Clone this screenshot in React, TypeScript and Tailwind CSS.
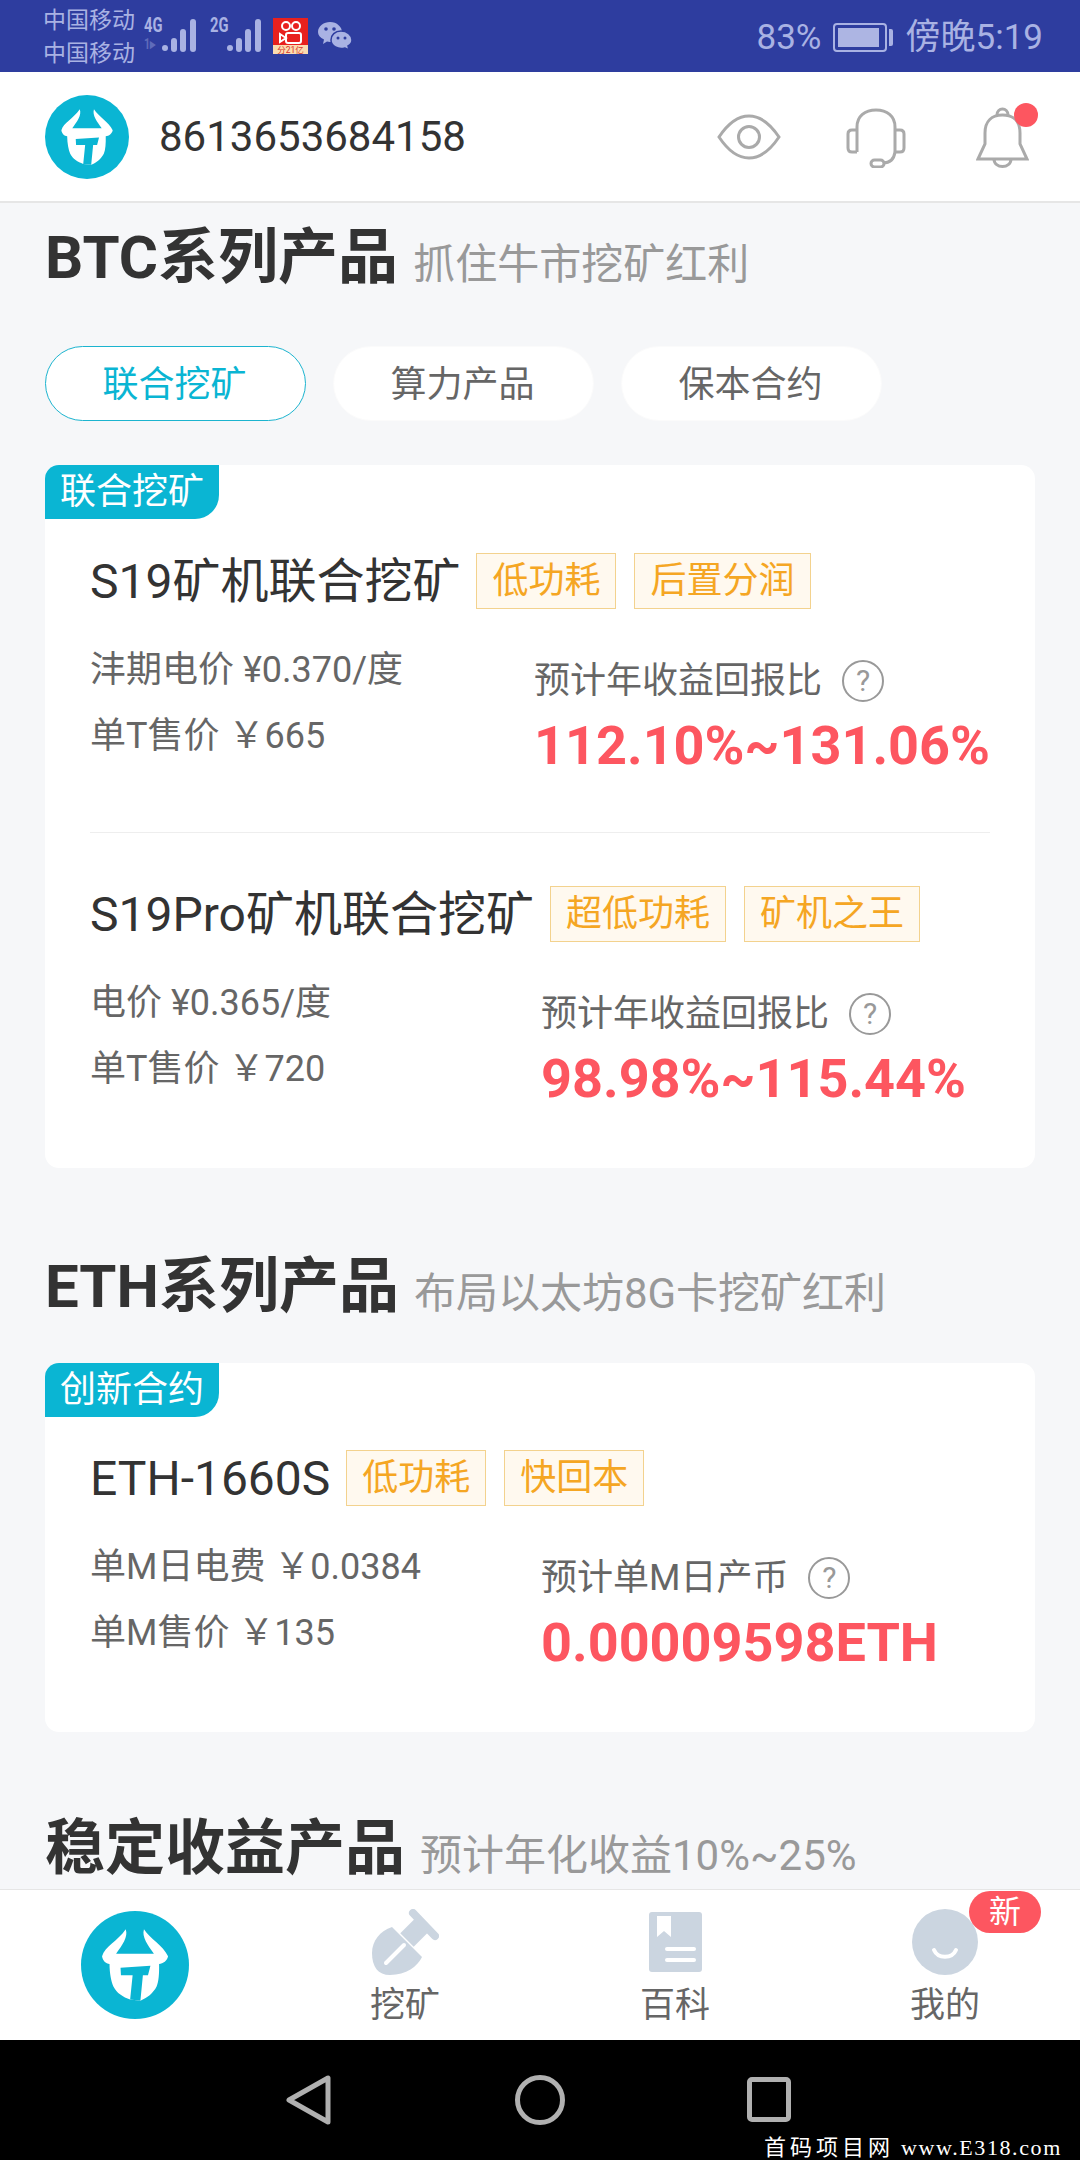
const RED = "#fd5660";

function BullLogo({ size }: { size: number }) {
  return (
    <svg width={size} height={size} viewBox="0 0 100 100" className="shrink-0">
      <circle cx="50" cy="50" r="50" fill="#0ab5d3" />
      <path
        d="M41.400 17 C44 24 38 32 32.500 39.500 L67.500 39.500 C62 32 56 24 58.300 17 C64 26 76 32 80.600 42 C80 46 76 49 72.300 49 C72.500 58 72 65 70 70 C67 76 61 81 55 83 L45.500 82 C39 80 33 76 30 70 C28 65 26.500 58 26.400 49 C23 49 20 46 19.500 42 C22 33 34 28 41.400 17 Z"
        fill="#fff"
      />
      <path
        d="M36.600 52.500 L64.300 50.600 L62 59.600 L57.300 59.600 L55 83 L45.500 82 L47.800 59.600 L37 59.600 Z"
        fill="#0ab5d3"
      />
    </svg>
  );
}

function Signal() {
  return (
    <svg width="35" height="33" viewBox="0 0 35 33" fill="#a9b2e3">
      <circle cx="3" cy="29" r="3" />
      <rect x="9" y="19" width="6" height="14" rx="3" />
      <rect x="18" y="10" width="6" height="23" rx="3" />
      <rect x="28" y="0" width="6" height="33" rx="3" />
    </svg>
  );
}

function Kuaishou() {
  return (
    <svg width="35" height="36" viewBox="0 0 35 36" className="shrink-0">
      <rect width="35" height="36" fill="#e8211e" />
      <rect y="27" width="35" height="9" fill="#fbdcb0" />
      <circle cx="13" cy="8" r="4" fill="none" stroke="#fff" strokeWidth="2" />
      <circle cx="23" cy="8" r="4" fill="none" stroke="#fff" strokeWidth="2" />
      <rect x="13" y="15" width="15" height="10" rx="2" fill="none" stroke="#fff" strokeWidth="2" />
      <path d="M13 20 L7 16 V24 Z" fill="none" stroke="#fff" strokeWidth="2" />
      <text x="17.5" y="35" textAnchor="middle" fontSize="8.5" fill="#d8332a">
        分21亿
      </text>
    </svg>
  );
}

function Wechat() {
  return (
    <svg width="34" height="28" viewBox="0 0 34 28" className="shrink-0">
      <path d="M12 0 C19 0 24 5 24 10 C24 15 19 20 12 20 L9 19.500 L5 22 L6 17.500 C2 15.500 0 13 0 10 C0 4 6 0 12 0 Z" fill="#a9b2e3" />
      <circle cx="8" cy="7" r="1.800" fill="#2e3d9f" />
      <circle cx="16" cy="7" r="1.800" fill="#2e3d9f" />
      <path d="M23 9 C29 9 34 13 34 18 C34 21 32 23 30 24 L31 28 L27 26 C20 28 13 24 13 18 C13 13 17 9 23 9 Z" fill="#a9b2e3" stroke="#2e3d9f" strokeWidth="1.500" />
      <circle cx="20" cy="16" r="1.500" fill="#2e3d9f" />
      <circle cx="27" cy="16" r="1.500" fill="#2e3d9f" />
    </svg>
  );
}

function StatusBar() {
  return (
    <div className="flex h-[72px] items-center bg-[#2e3d9f] pl-[43px] pr-[37px] text-[#a9b2e3]">
      <div className="mt-[2px] flex w-[101px] flex-col text-[23px] leading-[33px]">
        <span>中国移动</span>
        <span>中国移动</span>
      </div>
      <div className="flex w-[18px] origin-left scale-x-[0.7] flex-col self-start whitespace-nowrap pt-[14px] text-[21px] font-bold leading-[22px]">
        <span>4G</span>
        <span className="text-[15px] leading-[16px] opacity-40">1▸</span>
      </div>
      <div className="self-start pt-[19px]">
        <Signal />
      </div>
      <div className="ml-[13px] w-[17px] origin-left scale-x-[0.7] self-start whitespace-nowrap pt-[14px] text-[21px] font-bold leading-[22px]">
        2G
      </div>
      <div className="self-start pt-[19px]">
        <Signal />
      </div>
      <div className="ml-[11px] self-start pt-[18px]">
        <Kuaishou />
      </div>
      <div className="ml-[10px] self-start pt-[22px]">
        <Wechat />
      </div>
      <div className="ml-auto mt-[3px] flex items-center text-[35px] leading-[72px]">
        <span>83%</span>
        <div className="ml-[11px] flex items-center">
          <div className="h-[29px] w-[54px] rounded-[4px] border-2 border-[#a9b2e3] p-[3px]">
            <div className="h-full w-[41px] bg-[#adb5e3]" />
          </div>
          <div className="ml-[2px] h-[17px] w-[4px] rounded-r-[2px] bg-[#a9b2e3]" />
        </div>
        <span className="ml-[13px]">傍晚5:19</span>
      </div>
    </div>
  );
}

function Header() {
  return (
    <div className="flex h-[131px] items-center border-b-2 border-[#e6e6e6] bg-white pl-[45px]">
      <BullLogo size={84} />
      <span className="ml-[30px] text-[42px] leading-none text-[#333]">8613653684158</span>
      <div className="ml-auto flex items-center pr-[51px]">
        <svg width="64" height="46" viewBox="0 0 64 46" fill="none" stroke="#aaa" strokeWidth="3">
          <path d="M2 23 C12 8 22 2 32 2 C42 2 52 8 62 23 C52 38 42 44 32 44 C22 44 12 38 2 23 Z" />
          <circle cx="32" cy="23" r="10.500" />
        </svg>
        <svg width="60" height="60" viewBox="0 0 60 60" fill="none" stroke="#aaa" strokeWidth="3" className="ml-[65px] mt-[2px]">
          <path d="M11 44 V19 C11 8 19 2 30 2 C41 2 49 8 49 19 V44" />
          <path d="M11 22 H6 C3 22 2 24 2 26 V40 C2 42 3 44 6 44 H11" />
          <path d="M49 22 H54 C57 22 58 24 58 26 V40 C58 42 57 44 54 44 H49" />
          <path d="M49 44 C48 51 44 55 37 55" />
          <rect x="25" y="52" width="13" height="7" rx="3.500" />
        </svg>
        <div className="relative ml-[70px] mt-[2px] h-[63px] w-[53px]">
          <svg width="53" height="63" viewBox="0 0 53 63" fill="none" stroke="#aaa" strokeWidth="3">
            <path d="M2 53 L9 38 V27 C9 15 16 9 26.500 9 C37 9 44 15 44 27 V38 L51 53 Z" />
            <path d="M21 9 C21 1 32 1 32 9" />
            <path d="M18 53 C18 63 35 63 35 53" />
          </svg>
          <span className="absolute right-[-9px] top-[-3px] h-[24px] w-[24px] rounded-full bg-[#fd5660]" />
        </div>
      </div>
    </div>
  );
}

function SectionHead({ title, sub, className }: { title: string; sub: string; className: string }) {
  return (
    <div className={`flex h-[70px] items-center gap-[15px] whitespace-nowrap ${className}`}>
      <span className="text-[60px] font-bold leading-[70px] text-[#333]">{title}</span>
      <span className="mt-[13px] text-[42px] leading-[70px] text-[#999]">{sub}</span>
    </div>
  );
}

function Tab({ label, active }: { label: string; active?: boolean }) {
  return (
    <div
      className={
        active
          ? "flex h-[75px] w-[261px] items-center justify-center rounded-full border-[1.5px] border-[#1cb4cf] bg-white pt-[2px] pr-[2px] text-[36px] text-[#0ab5d3]"
          : "flex h-[75px] w-[261px] items-center justify-center rounded-full border-[1.5px] border-[#fbfbfb] bg-white pt-[2px] pr-[2px] text-[36px] text-[#666]"
      }
    >
      {label}
    </div>
  );
}

function Badge({ label }: { label: string }) {
  return (
    <span className="flex h-[56px] items-center border border-[#f3d28e] bg-[#fff9ef] px-[15px] text-[36px] leading-none text-[#f5a623]">
      {label}
    </span>
  );
}

function CardTag({ label }: { label: string }) {
  return (
    <div className="flex h-[54px] w-[174px] items-center justify-center rounded-tl-[14px] rounded-br-[24px] bg-[#0ab5d3] text-[36px] leading-none text-white">
      {label}
    </div>
  );
}

type Product = {
  name: string;
  tags: string[];
  specs: string[];
  label: string;
  value: string;
  left: string;
};

function ProductRow({ p }: { p: Product }) {
  return (
    <div>
      <div className="flex h-[56px] items-center">
        <span className="pt-[2px] text-[48px] leading-[56px] text-[#333]">{p.name}</span>
        <div className="ml-[16px] flex gap-[18px]">
          {p.tags.map((t) => (
            <Badge key={t} label={t} />
          ))}
        </div>
      </div>
      <div className="mt-[28px] flex">
        <div className={`flex flex-col text-[36px] leading-[66px] text-[#666] ${p.left}`}>
          {p.specs.map((s) => (
            <span key={s}>{s}</span>
          ))}
        </div>
        <div className="mt-[12px] flex flex-col">
          <div className="flex h-[64px] items-center text-[36px] text-[#666]">
            <span>{p.label}</span>
            <span className="ml-[20px] flex h-[42px] w-[42px] items-center justify-center rounded-full border-2 border-[#999] text-[30px] leading-none text-[#999]">
              ?
            </span>
          </div>
          <span className="text-[54px] font-bold leading-[66px]" style={{ color: RED }}>
            {p.value}
          </span>
        </div>
      </div>
    </div>
  );
}

const btc: Product[] = [
  {
    name: "S19矿机联合挖矿",
    tags: ["低功耗", "后置分润"],
    specs: ["沣期电价 ¥0.370/度", "单T售价 ￥665"],
    label: "预计年收益回报比",
    value: "112.10%~131.06%",
    left: "w-[445px]",
  },
  {
    name: "S19Pro矿机联合挖矿",
    tags: ["超低功耗", "矿机之王"],
    specs: ["电价 ¥0.365/度", "单T售价 ￥720"],
    label: "预计年收益回报比",
    value: "98.98%~115.44%",
    left: "w-[451px]",
  },
];

const eth: Product = {
  name: "ETH-1660S",
  tags: ["低功耗", "快回本"],
  specs: ["单M日电费 ￥0.0384", "单M售价 ￥135"],
  label: "预计单M日产币",
  value: "0.00009598ETH",
  left: "w-[451px]",
};

function ShovelIcon() {
  return (
    <svg width="67" height="66" viewBox="0 0 67 66" fill="#cbd5e0">
      <path d="M41 4 L63 27" stroke="#cbd5e0" strokeWidth="8" strokeLinecap="round" />
      <path d="M51 15 L35 31" stroke="#cbd5e0" strokeWidth="19" />
      <path d="M20 18 L50 48 C46 57 34 66 18 66 C6 66 0 58 0 44 C0 32 8 22 20 18 Z" />
      <path d="M14 54 L32 36" stroke="#fff" strokeWidth="4" strokeLinecap="round" />
    </svg>
  );
}

function BookIcon() {
  return (
    <svg width="53" height="60" viewBox="0 0 53 60">
      <rect width="53" height="60" rx="3" fill="#cbd5e0" />
      <path d="M8 4 H22 V25 L15 19 L8 25 Z" fill="#fff" />
      <rect x="16" y="35" width="31" height="4" rx="2" fill="#fff" />
      <rect x="16" y="46" width="31" height="4" rx="2" fill="#fff" />
    </svg>
  );
}

function MeIcon() {
  return (
    <svg width="66" height="66" viewBox="0 0 66 66" fill="none">
      <circle cx="33" cy="33" r="33" fill="#cbd5e0" />
      <path d="M22 41 C26 50 40 50 44 41" stroke="#fff" strokeWidth="4" strokeLinecap="round" />
    </svg>
  );
}

function NavItem({ label, children }: { label: string; children: React.ReactNode }) {
  return (
    <div className="flex flex-col items-center pt-[19px]">
      <div className="flex h-[66px] items-center">{children}</div>
      <span className="mt-[8px] text-[35px] leading-[46px] text-[#666]">{label}</span>
    </div>
  );
}

function BottomNav() {
  return (
    <div className="grid h-[151px] grid-cols-4 border-t border-[#e6e6e6] bg-white">
      <div className="flex justify-center pt-[21px]">
        <BullLogo size={108} />
      </div>
      <NavItem label="挖矿">
        <ShovelIcon />
      </NavItem>
      <NavItem label="百科">
        <BookIcon />
      </NavItem>
      <div className="relative">
        <NavItem label="我的">
          <MeIcon />
        </NavItem>
        <span className="absolute left-[159px] top-[1px] flex h-[42px] w-[72px] items-center justify-center rounded-full bg-[#fd5660] text-[32px] leading-none text-white">
          新
        </span>
      </div>
    </div>
  );
}

function SystemBar() {
  return (
    <div className="relative flex h-[120px] items-start justify-center bg-black pt-[35px]">
      <svg width="50" height="52" viewBox="0 0 50 52" fill="none" stroke="#b0b0b0" strokeWidth="5" strokeLinejoin="round" className="absolute left-[285px] top-[34px]">
        <path d="M43 4 V48 L4 26 Z" />
      </svg>
      <div className="h-[50px] w-[50px] rounded-full border-[5px] border-[#b0b0b0]" />
      <div className="absolute left-[747px] top-[37px] h-[45px] w-[44px] rounded-[5px] border-[5px] border-[#b0b0b0]" />
      <span className="absolute left-[764px] top-[95px] whitespace-nowrap text-[22px] leading-[25px] tracking-[1.6px] text-white [font-family:'Liberation_Serif','Noto_Sans_CJK_SC',serif]">
        <span className="tracking-[4px]">首码项目网</span> www.E318.com
      </span>
    </div>
  );
}

export default function App() {
  return (
    <div className="flex h-[2160px] w-[1080px] flex-col overflow-hidden bg-[#f6f7f9] [font-family:Roboto,'Noto_Sans_CJK_SC',sans-serif]">
      <StatusBar />
      <Header />
      <main className="flex-1 overflow-hidden px-[45px]">
        <SectionHead title="BTC系列产品" sub="抓住牛市挖矿红利" className="mt-[20px]" />
        <div className="mt-[53px] flex gap-[27px]">
          <Tab label="联合挖矿" active />
          <Tab label="算力产品" />
          <Tab label="保本合约" />
        </div>
        <div className="mt-[44px] h-[703px] rounded-[14px] bg-white">
          <CardTag label="联合挖矿" />
          <div className="px-[45px] pt-[34px]">
            <ProductRow p={btc[0]} />
            <div className="mb-[53px] mt-[53px] h-px bg-[#eeeeee]" />
            <ProductRow p={btc[1]} />
          </div>
        </div>
        <SectionHead title="ETH系列产品" sub="布局以太坊8G卡挖矿红利" className="mt-[84px]" />
        <div className="mt-[41px] h-[369px] rounded-[14px] bg-white">
          <CardTag label="创新合约" />
          <div className="px-[45px] pt-[33px]">
            <ProductRow p={eth} />
          </div>
        </div>
        <SectionHead title="稳定收益产品" sub="预计年化收益10%~25%" className="mt-[82px]" />
      </main>
      <BottomNav />
      <SystemBar />
    </div>
  );
}
